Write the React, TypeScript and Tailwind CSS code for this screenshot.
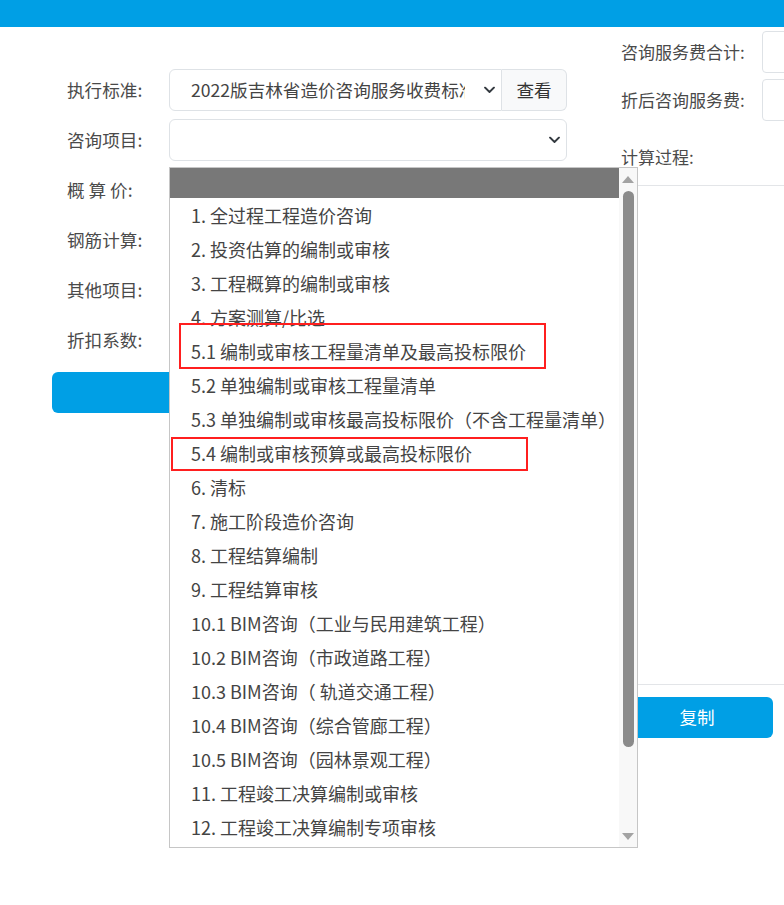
const options = [
  "1. 全过程工程造价咨询",
  "2. 投资估算的编制或审核",
  "3. 工程概算的编制或审核",
  "4. 方案测算/比选",
  "5.1 编制或审核工程量清单及最高投标限价",
  "5.2 单独编制或审核工程量清单",
  "5.3 单独编制或审核最高投标限价（不含工程量清单）",
  "5.4 编制或审核预算或最高投标限价",
  "6. 清标",
  "7. 施工阶段造价咨询",
  "8. 工程结算编制",
  "9. 工程结算审核",
  "10.1 BIM咨询（工业与民用建筑工程）",
  "10.2 BIM咨询（市政道路工程）",
  "10.3 BIM咨询（ 轨道交通工程）",
  "10.4 BIM咨询（综合管廊工程）",
  "10.5 BIM咨询（园林景观工程）",
  "11. 工程竣工决算编制或审核",
  "12. 工程竣工决算编制专项审核",
];

const labels = ["执行标准:", "咨询项目:", "概 算 价:", "钢筋计算:", "其他项目:", "折扣系数:"];

function Chevron() {
  return (
    <svg width="11" height="7" viewBox="0 0 11 7" className="absolute right-[6px] top-1/2 -translate-y-1/2">
      <path d="M1 1l4.5 4.5L10 1" fill="none" stroke="#343a40" strokeWidth="1.8" strokeLinecap="round" strokeLinejoin="round" />
    </svg>
  );
}

export default function App() {
  return (
    <div className="relative h-[905px] w-full overflow-hidden bg-white text-[#444] font-['Noto_Sans_CJK_SC',sans-serif]">
      {/* top bar */}
      <div className="h-[27px] bg-[#009fe5]" />

      <div className="flex">
        {/* left form */}
        <div className="w-[567px] shrink-0 pl-[52px] pt-[42px]">
          <div className="flex flex-col gap-[8px]">
            {labels.map((l, i) => (
              <div key={l} className="flex h-[42px] items-center">
                <div className="w-[117px] shrink-0 pl-[15px] text-[17.6px] text-[#4a4a4a] whitespace-pre">{l}</div>
                {i === 0 ? (
                  <div className="flex h-full min-w-0 flex-1">
                    <div className="relative flex h-full min-w-0 flex-1 items-center overflow-hidden rounded-l-[6px] border border-[#dee2e6] pl-[21px] pr-[36px]">
                      <span className="min-w-0 overflow-hidden whitespace-nowrap text-[17.6px] text-[#444]">2022版吉林省造价咨询服务收费标准</span>
                      <Chevron />
                    </div>
                    <div className="flex h-full w-[65px] shrink-0 items-center justify-center rounded-r-[6px] border border-l-0 border-[#dee2e6] bg-[#f8f9fa] text-[17.6px] text-[#333]">
                      查看
                    </div>
                  </div>
                ) : (
                  <div className="relative h-full flex-1 rounded-[6px] border border-[#dee2e6]">
                    {i === 1 && <Chevron />}
                  </div>
                )}
              </div>
            ))}
          </div>
          <div className="mt-[11px] h-[41px] rounded-[6px] bg-[#009fe5]" />
        </div>

        {/* right panel */}
        <div className="ml-[54px] shrink-0 pt-[4px] text-[17px] text-[#4a4a4a]">
          <div className="flex flex-col gap-[6px]">
            <div className="flex h-[42px] items-center">
              <div className="w-[141px] shrink-0">咨询服务费合计:</div>
              <div className="h-full w-[200px] rounded-[4px] border border-[#dee2e6]" />
            </div>
            <div className="flex h-[42px] items-center">
              <div className="w-[141px] shrink-0">折后咨询服务费:</div>
              <div className="h-full w-[200px] rounded-[4px] border border-[#dee2e6]" />
            </div>
          </div>
          <div className="h-[64px] pt-[24px] leading-[24px]">计算过程:</div>
          <div className="h-[500px] w-[320px] border border-[#e3e5e8]" />
          <div className="mt-[12px] flex h-[41px] w-[152px] items-center justify-center rounded-[6px] bg-[#009fe5] text-[17.6px] text-white">
            复制
          </div>
        </div>
      </div>

      {/* open select list */}
      <div className="absolute left-[169px] top-[167px] flex h-[681px] w-[469px] border border-[#c6c6c6] bg-white">
        <div className="flex flex-1 flex-col">
          <div className="h-[30px] bg-[#787878]" />
          {options.map((o) => (
            <div key={o} className="flex h-[34px] shrink-0 items-center whitespace-nowrap pl-[21px] text-[18px] text-[#444]">
              {o}
            </div>
          ))}
        </div>
        <div className="flex w-[18px] flex-col items-center bg-[#f8f8f8]">
          <svg width="12" height="7" viewBox="0 0 12 7" className="mt-[8px]">
            <path d="M0 7L6 0l6 7z" fill="#a3a3a3" />
          </svg>
          <div className="mt-[8px] h-[556px] w-[11px] rounded-full bg-[#8b8b8b]" />
          <div className="flex-1" />
          <svg width="12" height="7" viewBox="0 0 12 7" className="mb-[7px]">
            <path d="M0 0h12L6 7z" fill="#a3a3a3" />
          </svg>
        </div>
      </div>

      {/* red highlight boxes */}
      <div className="absolute left-[179px] top-[323px] h-[46px] w-[367px] border-2 border-[#ff1f1f]" />
      <div className="absolute left-[171px] top-[437px] h-[34px] w-[357px] border-2 border-[#ff1f1f]" />
    </div>
  );
}
